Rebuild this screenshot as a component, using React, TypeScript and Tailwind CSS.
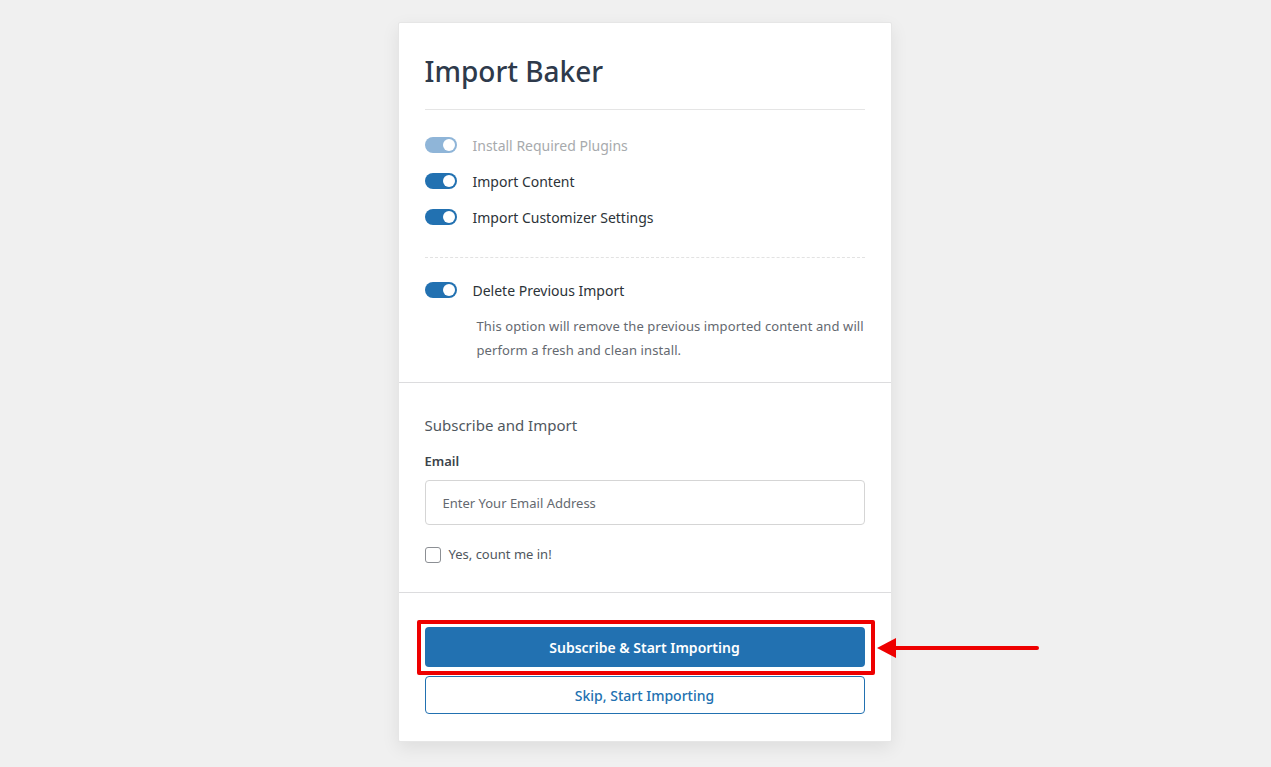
import React, { useState } from 'react';

const FONT = { fontFamily: '"Noto Sans", "Open Sans", sans-serif' };

function Toggle({ on, disabled }: { on: boolean; disabled?: boolean }) {
  return (
    <span
      className={`relative inline-flex h-4 w-8 shrink-0 items-center rounded-full ${
        disabled ? 'bg-[#8fb5d8]' : 'bg-[#2271b1]'
      }`}
    >
      <span
        className={`absolute h-3 w-3 rounded-full bg-white ${on ? 'right-[2px]' : 'left-[2px]'}`}
      />
    </span>
  );
}

const OPTIONS = [
  { label: 'Install Required Plugins', disabled: true },
  { label: 'Import Content' },
  { label: 'Import Customizer Settings' },
];

export default function App() {
  const [checked, setChecked] = useState(false);

  return (
    <div className="min-h-[767px] bg-[#f0f0f0] pt-[22px] pl-[18px] flex justify-center" style={FONT}>
      <div className="w-[494px] h-fit bg-white border border-[#e6e6e6] rounded-[2px] shadow-[0_6px_18px_rgba(0,0,0,0.08)]">
        {/* Options */}
        <div className="px-[26px] pt-[28px] pb-[20px] border-b border-[#dcdcde]">
          <h1 className="text-[28px] leading-[40px] font-medium text-[#2e3a4b] pb-[18px] border-b border-[#e5e5e5]">
            Import Baker
          </h1>

          <div className="flex flex-col gap-3 pt-[23px] pb-7 border-b border-dashed border-[#e2e2e2]">
            {OPTIONS.map((o) => (
              <div key={o.label} className="flex items-center gap-4 h-6">
                <Toggle on disabled={o.disabled} />
                <span className={`text-[14px] ${o.disabled ? 'text-[#a7aaad]' : 'text-[#2c3338]'}`}>
                  {o.label}
                </span>
              </div>
            ))}
          </div>

          <div className="pt-5">
            <div className="flex items-center gap-4 h-6">
              <Toggle on />
              <span className="text-[14px] text-[#2c3338]">Delete Previous Import</span>
            </div>
            <p className="mt-[12px] pl-[52px] text-[13px] tracking-[0.1px] leading-6 text-[#646970]">
              This option will remove the previous imported content and will perform a fresh and clean install.
            </p>
          </div>
        </div>

        {/* Subscribe */}
        <div className="px-[26px] pt-[31px] pb-[27px] border-b border-[#dcdcde]">
          <h2 className="text-[15px] leading-[22px] text-[#50575e]">Subscribe and Import</h2>
          <label className="block mt-[15px] text-[13px] leading-5 font-semibold text-[#3c434a]">Email</label>
          <input
            type="email"
            placeholder="Enter Your Email Address"
            className="mt-[9px] w-full h-[45px] px-[17px] rounded-[4px] border border-[#d5d5d5] text-[13px] text-[#2c3338] placeholder:text-[#646970] outline-none"
          />
          <label className="mt-5 flex items-center gap-2 h-5 cursor-pointer">
            <input
              type="checkbox"
              checked={checked}
              onChange={(e) => setChecked(e.target.checked)}
              className="appearance-none w-4 h-4 rounded-[3px] border border-[#8c8f94] bg-white checked:bg-[#2271b1]"
            />
            <span className="text-[13px] text-[#50575e]">Yes, count me in!</span>
          </label>
        </div>

        {/* Actions */}
        <div className="px-[26px] pt-[34px] pb-[27px] flex flex-col gap-[9px]">
          <div className="relative">
            <button className="w-full h-10 rounded-[4px] bg-[#2271b1] text-white text-[14px] font-semibold">
              Subscribe &amp; Start Importing
            </button>
            {/* annotation */}
            <div className="absolute -left-2 -right-[10px] -top-[7px] -bottom-2 border-4 border-[#ee0000] rounded-[2px] pointer-events-none" />
            <svg
              className="absolute top-[9px] left-[calc(100%+12px)] pointer-events-none"
              width="162"
              height="24"
              viewBox="0 0 162 24"
            >
              <path d="M16 12 L160 12" stroke="#ee0000" strokeWidth="4" strokeLinecap="round" />
              <path d="M0 12 L19 2 L19 22 Z" fill="#ee0000" />
            </svg>
          </div>
          <button className="w-full h-[38px] rounded-[4px] border border-[#2271b1] bg-white text-[#2271b1] text-[14px] font-medium">
            Skip, Start Importing
          </button>
        </div>
      </div>
    </div>
  );
}
